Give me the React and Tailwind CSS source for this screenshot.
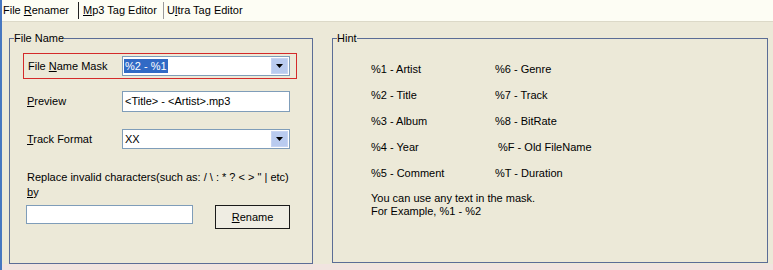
const font = { fontFamily: '"Liberation Sans", Arial, sans-serif' };

function ArrowButton() {
  return (
    <div className="w-[17px] h-[16px] bg-[#b9cbef] border border-[#c6d4f2] flex items-center justify-center">
      <svg width="7" height="4" viewBox="0 0 7 4">
        <path d="M0 0h7L3.5 4z" fill="#000" />
      </svg>
    </div>
  );
}

function Combo({ children }) {
  return (
    <div className="w-[168px] h-[20px] bg-white border border-[#7f9db9] flex items-center justify-between pl-[1px] pr-[1px]">
      <div className="flex items-center h-full">{children}</div>
      <ArrowButton />
    </div>
  );
}

function Group({ title, className, children }) {
  return (
    <fieldset className={`border border-[#5b6d96] ${className}`}>
      <legend className="ml-[4px] px-0 leading-[13px]">{title}</legend>
      {children}
    </fieldset>
  );
}

const hints = [
  ["%1 - Artist", "%6 - Genre"],
  ["%2 - Title", "%7 - Track"],
  ["%3 - Album", "%8 - BitRate"],
  ["%4 - Year", " %F - Old FileName"],
  ["%5 - Comment", "%T - Duration"],
];

export default function App() {
  return (
    <div
      className="w-[773px] h-[270px] bg-[#ece9d8] border-l-2 border-[#4677c0] flex flex-col text-[11px] text-black overflow-hidden"
      style={font}
    >
      <div className="h-[22px] bg-[#fdfdf4] border-b border-[#dcd9c8] flex items-center leading-[13px]">
        <span className="w-[76px] pl-[1px]">
          File <u>R</u>enamer
        </span>
        <span className="w-px h-[17px] bg-[#222]" />
        <span className="w-[84px] pl-[4px]">
          <u>M</u>p3 Tag Editor
        </span>
        <span className="w-px h-[17px] bg-[#9a9a9a]" />
        <span className="pl-[3px]">
          U<u>l</u>tra Tag Editor
        </span>
      </div>

      <div className="flex gap-[19px] pl-[7px] mt-[10px]">
        <Group title="File Name" className="w-[304px] h-[232px]">
          <div className="ml-[13px] mt-[8px] w-[274px] h-[26px] border border-[#d42a2a] flex items-center pl-[4px]">
            <span className="w-[94px]">
              File <u>N</u>ame Mask
            </span>
            <Combo>
              <span className="bg-[#316ac5] text-white px-[1px] leading-[14px]">%2 - %1</span>
            </Combo>
          </div>

          <div className="ml-[17px] mt-[12px] flex items-center">
            <span className="w-[95px]">
              <u>P</u>review
            </span>
            <div className="w-[168px] h-[21px] bg-white border border-[#7f9db9] flex items-center pl-[2px]">
              &lt;Title&gt; - &lt;Artist&gt;.mp3
            </div>
          </div>

          <div className="ml-[17px] mt-[17px] flex items-center">
            <span className="w-[95px]">
              <u>T</u>rack Format
            </span>
            <Combo>
              <span className="pl-[1px]">XX</span>
            </Combo>
          </div>

          <div className="ml-[17px] mt-[21px] leading-[15px]">
            <div>Replace invalid characters(such as: / \ : * ? &lt; &gt; " | etc)</div>
            <div>
              <u>b</u>y
            </div>
          </div>

          <div className="ml-[16px] mt-[5px] flex items-start">
            <div className="w-[167px] h-[19px] bg-white border border-[#7f9db9]" />
            <button className="ml-[22px] w-[75px] h-[24px] border border-[#1a1a1a] bg-[#efede3] flex items-center justify-center">
              <span>
                <u>R</u>ename
              </span>
            </button>
          </div>
        </Group>

        <Group title="Hint" className="w-[436px] h-[231px]">
          <div className="pl-[38px] mt-[11px]">
            {hints.map(([a, b]) => (
              <div key={a} className="h-[26px] flex items-center">
                <span className="w-[124px]">{a}</span>
                <span className="whitespace-pre">{b}</span>
              </div>
            ))}
            <div className="mt-[6px] leading-[13px]">
              <div>You can use any text in the mask.</div>
              <div>For Example, %1 - %2</div>
            </div>
          </div>
        </Group>
      </div>
      <div className="flex-1" />
      <div className="h-[6px] bg-[#f1e4e0]" />
    </div>
  );
}
